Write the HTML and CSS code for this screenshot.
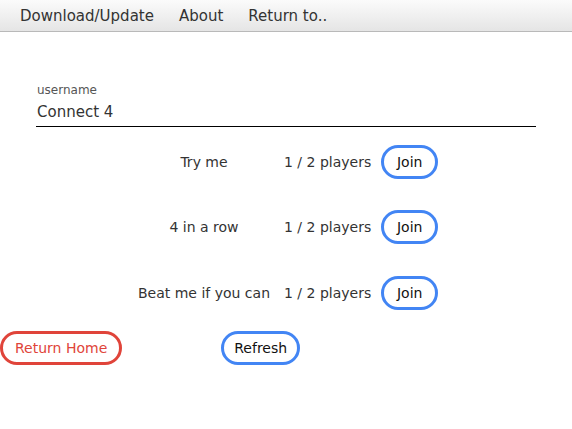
FILE: index.html
```html
<!DOCTYPE html>
<html>
<head>
<meta charset="utf-8">
<link rel="stylesheet" href="styles.css">
</head>
<body>
<nav class="nav">
  <a class="nav-item">Download/Update</a>
  <a class="nav-item">About</a>
  <a class="nav-item">Return to..</a>
</nav>
<main class="main">
  <div class="field">
    <label class="field-label">username</label>
    <div class="field-input">Connect 4</div>
  </div>
  <div class="games">
    <div class="game-name">Try me</div>
    <div class="game-players">1 / 2 players</div>
    <button class="btn btn-blue btn-join">Join</button>
    <div class="game-name">4 in a row</div>
    <div class="game-players">1 / 2 players</div>
    <button class="btn btn-blue btn-join">Join</button>
    <div class="game-name">Beat me if you can</div>
    <div class="game-players">1 / 2 players</div>
    <button class="btn btn-blue btn-join">Join</button>
  </div>
  <div class="actions">
    <button class="btn btn-red btn-home">Return Home</button>
    <button class="btn btn-blue">Refresh</button>
  </div>
</main>
</body>
</html>
```
FILE: styles.css
```css
html, body {
  margin: 0;
  padding: 0;
  background: #fff;
}
body {
  font-family: "DejaVu Sans", sans-serif;
  font-size: 14px;
  color: #333;
}
.nav {
  display: flex;
  height: 31px;
  align-items: center;
  padding-left: 20px;
  gap: 25px;
  background: linear-gradient(#fbfbfb, #e5e5e5);
  border-bottom: 1px solid #b9b9b9;
}
.nav-item {
  color: #333;
  font-size: 15px;
}
.main {
  padding-top: 51px;
}
.field {
  margin-left: 36px;
  width: 500px;
}
.field-label {
  display: block;
  font-size: 12px;
  color: #555;
  padding-left: 1px;
}
.field-input {
  font-size: 15px;
  padding: 6px 1px 5px;
  border-bottom: 1px solid #000;
}
.games {
  display: grid;
  grid-template-columns: 140px auto auto;
  grid-auto-rows: 65.5px;
  column-gap: 10px;
  align-items: center;
  justify-content: start;
  margin-left: 134px;
  margin-top: 2px;
}
.game-name {
  text-align: center;
}
.btn {
  font-family: inherit;
  font-size: 14px;
  color: #111;
  background: #fff;
  border: 3px solid #4285f4;
  border-radius: 18px;
  height: 34px;
  padding: 0 10px;
}
.btn-join {
  min-width: 57px;
}
.btn-home {
  padding: 0 12px;
}
.btn-red {
  border-color: #e0443a;
  color: #e0443a;
}
.actions {
  display: flex;
  gap: 99px;
  margin-top: 5px;
}
```
